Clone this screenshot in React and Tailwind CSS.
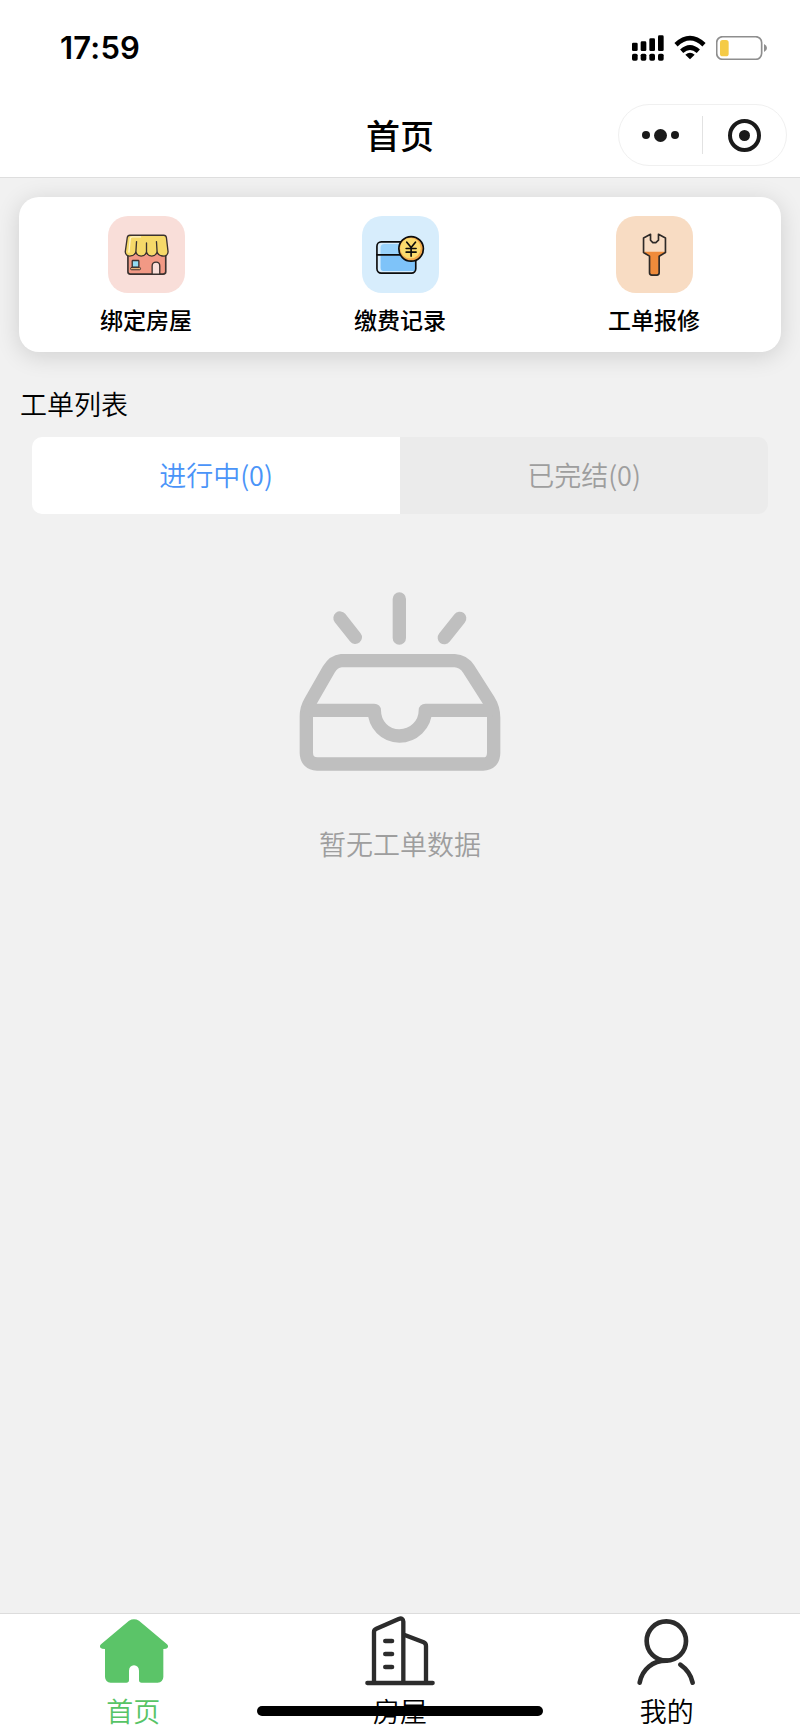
const shortcuts = [
  { label: '绑定房屋', bg: 'bg-[#f9ded9]', icon: <ShopIcon /> },
  { label: '缴费记录', bg: 'bg-[#d7edfc]', icon: <PaymentIcon /> },
  { label: '工单报修', bg: 'bg-[#f8dcc3]', icon: <WrenchIcon /> },
];

const navItems = [
  { label: '首页', color: 'text-[#57c466]', icon: <HomeIcon /> },
  { label: '房屋', color: 'text-black', icon: <BuildingIcon /> },
  { label: '我的', color: 'text-black', icon: <UserIcon /> },
];

function SignalIcon() {
  return (
    <svg className="h-[26px] w-8" viewBox="99 46 96 78">
      <rect x="99" y="69" width="17" height="25" rx="4" />
      <rect x="125" y="65" width="17" height="29" rx="4" />
      <rect x="151" y="56" width="17" height="38" rx="4" />
      <rect x="177" y="47" width="17" height="47" rx="4" />
      <rect x="99" y="102" width="17" height="21" rx="5" />
      <rect x="125" y="102" width="17" height="21" rx="5" />
      <rect x="151" y="102" width="17" height="21" rx="5" />
      <rect x="177" y="102" width="17" height="21" rx="5" />
    </svg>
  );
}

function WifiIcon() {
  return (
    <svg className="h-[26px] w-8" viewBox="226 44 96 78">
      <path d="M232 73 Q274 34 316 73" fill="none" stroke="#000" strokeWidth="14" />
      <path d="M249 93 Q274 70 299 93" fill="none" stroke="#000" strokeWidth="14" />
      <path d="M260 103 Q274 92 288 103 L274 117 Z" />
    </svg>
  );
}

function BatteryIcon() {
  return (
    <svg className="h-6 w-[51px]" viewBox="348 47 153 72">
      <rect x="350" y="49" width="135" height="68" rx="18" fill="none" stroke="#8e8e8e" strokeWidth="5" />
      <rect x="360" y="59" width="26" height="49" rx="8" fill="#f5cb46" />
      <path d="M492 71 Q501 75 501 83 Q501 91 492 95 Z" fill="#8e8e8e" />
    </svg>
  );
}

function ShopIcon() {
  return (
    <svg className="h-[77px] w-[77px]" viewBox="82 48 232 232" strokeLinejoin="round" strokeLinecap="round">
      <path d="M142 160 V216 Q142 223 149 223 H248 Q256 223 256 216 V160 Z" fill="#f29985" stroke="#3b3230" strokeWidth="5" />
      <path d="M148 106 H250 Q257 106 258 113 L263 156 Q262 168 251 169 Q235 169 230 157 Q224 169 214 169 Q203 169 198 157 Q193 169 182 169 Q171 169 166 157 Q160 169 147 169 Q135 168 134 156 L140 113 Q141 106 148 106 Z" fill="#f6d969" stroke="#3b3230" strokeWidth="4" />
      <path d="M145 157 L149 116 Q150 111 156 111 H180" fill="none" stroke="#fff4c9" strokeWidth="4" />
      <path d="M168 125 L166 157 M198 129 V157 M228 125 L230 157" fill="none" stroke="#3b3230" strokeWidth="4" />
      <rect x="155" y="182" width="20" height="20" rx="2" fill="#93dcf3" stroke="#3b3230" strokeWidth="4" />
      <rect x="150" y="203" width="30" height="7" rx="3" fill="#e8b477" stroke="#3b3230" strokeWidth="3" />
      <path d="M215 223 V199 Q215 187 227 187 Q238 187 238 199 V223 Z" fill="#f9ded9" stroke="#3b3230" strokeWidth="4" />
    </svg>
  );
}

function PaymentIcon() {
  return (
    <svg className="h-[77px] w-[77px]" viewBox="65 48 232 232" strokeLinejoin="round" strokeLinecap="round">
      <rect x="110" y="126" width="117" height="94" rx="13" fill="#d7edfc" />
      <path d="M121 163 V144 Q121 132 132 132 H222 V163 Z" fill="#9ad3fb" />
      <path d="M121 166 H225 V214 H130 Q121 214 121 204 Z" fill="#7ec3f9" />
      <rect x="110" y="126" width="117" height="94" rx="13" fill="none" stroke="#0c0c0c" strokeWidth="5" />
      <path d="M110 165 H227" stroke="#0c0c0c" strokeWidth="5" />
      <circle cx="213" cy="147" r="37" fill="#f3a94b" stroke="#0c0c0c" strokeWidth="5" />
      <circle cx="211" cy="145" r="31" fill="#fbdb6e" />
      <path d="M200 127 L213 143 L226 127 M213 143 V169 M198 146 H228 M198 157 H228" fill="none" stroke="#0c0c0c" strokeWidth="5" />
    </svg>
  );
}

function WrenchIcon() {
  return (
    <svg className="h-[77px] w-[77px]" viewBox="77 48 232 232" strokeLinejoin="round" strokeLinecap="round">
      <path d="M160 156 H226 V158 L207 170 V220 Q207 226 201 226 H184 Q178 226 178 220 V170 L160 158 Z" fill="#ef8b3b" />
      <path d="M181 103 L160 114 V158 L178 169 V219 Q178 226 185 226 H200 Q207 226 207 219 V169 L226 158 V114 L205 103 V121 L197 128 H188 L181 121 Z" fill="none" stroke="#2e2a28" strokeWidth="5" />
    </svg>
  );
}

function EmptyIcon() {
  return (
    <svg className="h-[180px] w-[202px]" viewBox="57 67 606 540" fill="none" stroke="#bfbfbf" strokeWidth="40" strokeLinecap="round" strokeLinejoin="round">
      <path d="M358 88 V205 M180 145 L226 203 M539 146 L493 204" />
      <path d="M184 273 H524 Q550 274 566 298 L626 392 Q641 416 641 444 V550 Q640 582 609 583 H112 Q80 581 79 550 V440 Q79 416 91 396 L146 300 Q161 275 184 273 Z" />
      <path d="M90 422 H283 C283 466 316 499 358 499 C400 499 436 466 436 422 H628" />
    </svg>
  );
}

function HomeIcon() {
  return (
    <svg className="h-[72px] w-[72px]" viewBox="112 41 216 216" fill="#5bc468">
      <path d="M208 61 Q223 53 238 61 L322 132 Q328 138 323 143 Q321 146 311 146 V230 Q310 246 294 247 H246 Q238 247 238 239 V211 Q237 196 223 195 Q209 196 208 211 V239 Q208 247 200 247 H153 Q137 246 136 230 V146 Q126 146 123 143 Q118 138 124 132 Z" />
    </svg>
  );
}

function BuildingIcon() {
  return (
    <svg className="h-[72px] w-[72px]" viewBox="132 42 216 216" fill="none" stroke="#2c2c2c" strokeWidth="13" strokeLinecap="round" strokeLinejoin="round">
      <path d="M142 249 H338" />
      <path d="M162 247 V96 Q162 89 169 86 L236 57 Q249 52 250 65 V247" />
      <path d="M254 105 L311 127 Q318 130 318 138 V247" />
      <path d="M196 123 H216 M196 162 H216 M196 201 H216" strokeWidth="14" />
    </svg>
  );
}

function UserIcon() {
  return (
    <svg className="h-[72px] w-[72px]" viewBox="212 42 216 216" fill="none" stroke="#2c2c2c" strokeWidth="14" strokeLinecap="round">
      <circle cx="318" cy="123" r="59" />
      <path d="M238 248 C246 207 278 182 318 182" />
      <path d="M360 194 Q390 215 397 248" />
    </svg>
  );
}

function Header() {
  return (
    <header className="h-[178px] border-b border-[#dedede] bg-white">
      <div className="flex h-24 items-center justify-between pl-[60px] pr-[33px]">
        <span className="font-['Inter'] text-[31px] font-semibold tracking-[0.2px]">17:59</span>
        <div className="flex items-center gap-[10px]">
          <SignalIcon />
          <WifiIcon />
          <BatteryIcon />
        </div>
      </div>
      <div className="grid h-[78px] grid-cols-[1fr_auto_1fr] items-center px-[13px]">
        <h1 className="col-start-2 text-[34px] leading-[40px] font-medium">首页</h1>
        <div className="flex h-[62px] w-[169px] items-center justify-self-end rounded-full border border-[#f0f0f0]">
          <div className="flex flex-1 items-center justify-center gap-1">
            <span className="h-2 w-2 rounded-full bg-[#1a1a1a]" />
            <span className="h-[13px] w-[13px] rounded-full bg-[#1a1a1a]" />
            <span className="h-2 w-2 rounded-full bg-[#1a1a1a]" />
          </div>
          <div className="h-[38px] w-px bg-[#e2e2e2]" />
          <div className="flex flex-1 justify-center">
            <div className="flex h-[33px] w-[33px] items-center justify-center rounded-full border-4 border-[#1a1a1a]">
              <span className="h-[11px] w-[11px] rounded-full bg-[#1a1a1a]" />
            </div>
          </div>
        </div>
      </div>
    </header>
  );
}

function App() {
  return (
    <div className="flex h-[1731px] w-[800px] flex-col overflow-hidden bg-[#f1f1f1] font-['Noto_Sans_CJK_SC',sans-serif] text-black">
      <Header />

      <main className="flex-1 px-[19px] pt-[19px]">
        {/* Shortcuts */}
        <div className="grid h-[155px] grid-cols-3 rounded-[20px] bg-white pt-[19px] shadow-[0_4px_24px_rgba(0,0,0,0.14)]">
          {shortcuts.map((item) => (
            <div key={item.label} className="flex flex-col items-center">
              <div className={`rounded-[20px] ${item.bg}`}>{item.icon}</div>
              <span className="mt-[10px] text-[23px] leading-8 font-medium">{item.label}</span>
            </div>
          ))}
        </div>

        {/* Work orders */}
        <h2 className="mt-8 ml-px text-[27px] leading-10 font-[350]">工单列表</h2>
        <div className="mx-[13px] mt-[13px] grid h-[77px] grid-cols-2 overflow-hidden rounded-[10px] text-[27px] font-[350]">
          <button className="bg-white text-[#4a94f8]">进行中(0)</button>
          <button className="bg-[#ebebeb] text-[#9e9e9e]">已完结(0)</button>
        </div>

        <div className="mt-[78px] flex flex-col items-center">
          <EmptyIcon />
          <p className="mt-[52px] text-[27px] leading-10 font-[350] text-[#9e9e9e]">暂无工单数据</p>
        </div>
      </main>

      <nav className="relative grid h-[118px] grid-cols-3 border-t border-[#dcdcdc] bg-white">
        {navItems.map((item) => (
          <div key={item.label} className="flex flex-col items-center">
            {item.icon}
            <span className={`mt-[5px] text-[27px] leading-10 font-[350] ${item.color}`}>{item.label}</span>
          </div>
        ))}
        <div className="absolute bottom-[15px] left-[257px] h-[10px] w-[286px] rounded-full bg-black" />
      </nav>
    </div>
  );
}

export default App;
